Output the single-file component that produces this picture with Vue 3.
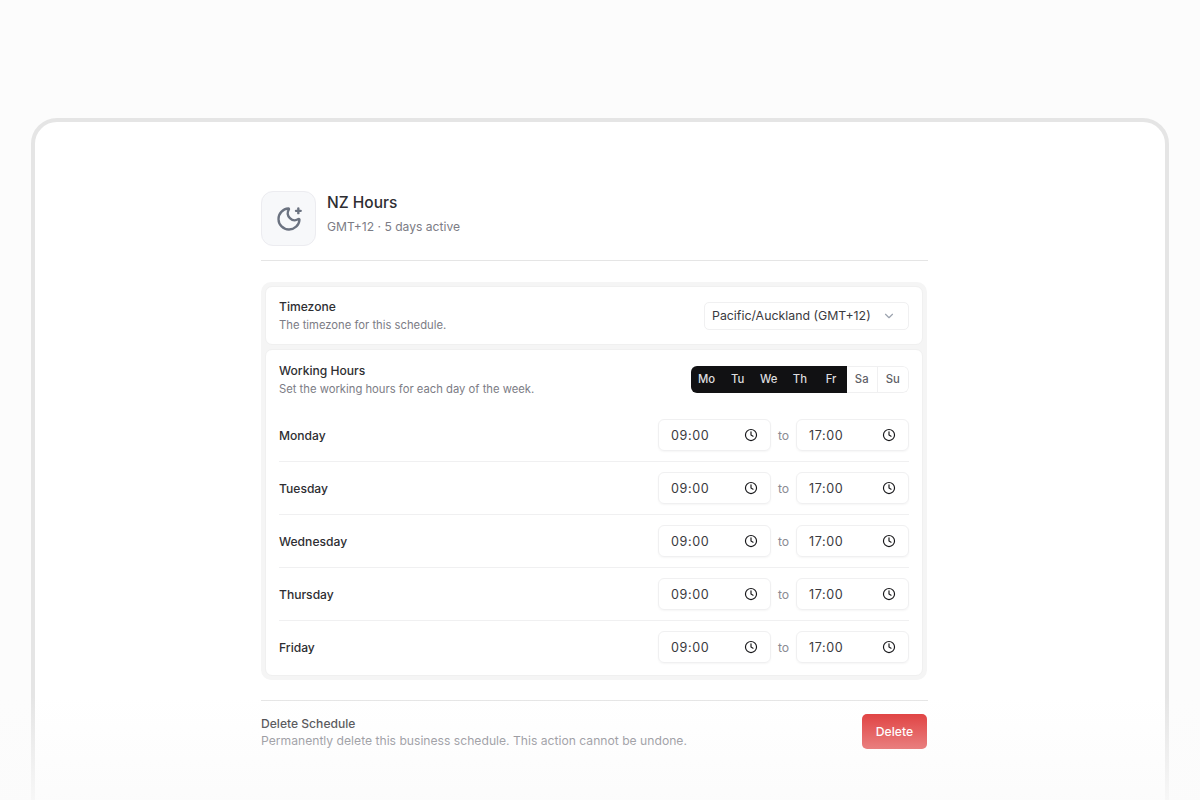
<template>
  <div class="page">
    <div class="frame">
      <div class="content">
        <header class="head">
          <div class="head-icon">
            <svg width="28" height="28" viewBox="0 0 24 24" fill="none" stroke="#6b7280" stroke-width="2" stroke-linecap="round" stroke-linejoin="round">
              <path d="M18 5h4" />
              <path d="M20 3v4" />
              <path d="M20.985 12.486a9 9 0 1 1-9.473-9.472c.405-.022.617.46.402.803a6 6 0 0 0 8.268 8.268c.344-.215.825-.004.803.401" />
            </svg>
          </div>
          <div class="head-text">
            <h1 class="title">NZ Hours</h1>
            <p class="subtitle">GMT+12 · 5 days active</p>
          </div>
        </header>

        <div class="group">
          <section class="panel tz">
            <div>
              <div class="label">Timezone</div>
              <div class="hint">The timezone for this schedule.</div>
            </div>
            <div class="select">
              <span>Pacific/Auckland (GMT+12)</span>
              <svg width="14" height="14" viewBox="0 0 24 24" fill="none" stroke="#9ca3af" stroke-width="2" stroke-linecap="round" stroke-linejoin="round">
                <path d="M6 9l6 6 6-6" />
              </svg>
            </div>
          </section>

          <section class="panel hours">
            <div class="hours-head">
              <div>
                <div class="label">Working Hours</div>
                <div class="hint">Set the working hours for each day of the week.</div>
              </div>
              <div class="days">
                <span v-for="d in days" :key="d.name" class="day" :class="{ on: d.on }">{{ d.name }}</span>
              </div>
            </div>

            <div v-for="row in rows" :key="row" class="row">
              <span class="row-name">{{ row }}</span>
              <div class="times">
                <div class="time">
                  <span>09:00</span>
                  <svg class="clock" width="14" height="14" viewBox="0 0 24 24" fill="none" stroke="#18181b" stroke-width="2" stroke-linecap="round" stroke-linejoin="round">
                    <circle cx="12" cy="12" r="9.5" />
                    <path d="M12 6.5V12l3.5 2" />
                  </svg>
                </div>
                <span class="to">to</span>
                <div class="time">
                  <span>17:00</span>
                  <svg class="clock" width="14" height="14" viewBox="0 0 24 24" fill="none" stroke="#18181b" stroke-width="2" stroke-linecap="round" stroke-linejoin="round">
                    <circle cx="12" cy="12" r="9.5" />
                    <path d="M12 6.5V12l3.5 2" />
                  </svg>
                </div>
              </div>
            </div>
          </section>
        </div>

        <div class="danger">
          <div>
            <div class="danger-title">Delete Schedule</div>
            <div class="danger-hint">Permanently delete this business schedule. This action cannot be undone.</div>
          </div>
          <button class="delete" type="button">Delete</button>
        </div>
      </div>
    </div>
    <div class="fade"></div>
  </div>
</template>

<script setup>
const days = [
  { name: 'Mo', on: true },
  { name: 'Tu', on: true },
  { name: 'We', on: true },
  { name: 'Th', on: true },
  { name: 'Fr', on: true },
  { name: 'Sa', on: false },
  { name: 'Su', on: false },
]

const rows = ['Monday', 'Tuesday', 'Wednesday', 'Thursday', 'Friday']
</script>

<style>
html, body {
  margin: 0;
  background: #fcfcfc;
}
</style>

<style scoped>
.page {
  position: relative;
  height: 800px;
  overflow: hidden;
  padding: 118px 31px 0;
  box-sizing: border-box;
  font-family: Inter, "Liberation Sans", sans-serif;
  color: #18181b;
}

.frame {
  height: 760px;
  box-sizing: border-box;
  border: 4px solid #e5e5e5;
  border-radius: 26px;
  background: #fff;
  padding: 69px 0 0 226px;
}

.content {
  width: 667px;
}

/* header */
.head {
  display: flex;
  align-items: flex-start;
  gap: 11px;
  padding-bottom: 14px;
  border-bottom: 1px solid #e5e5e5;
}

.head-icon {
  width: 55px;
  height: 55px;
  box-sizing: border-box;
  display: flex;
  align-items: center;
  justify-content: center;
  background: #f7f8fa;
  border: 1px solid #ececf0;
  border-radius: 12px;
}

.head-text {
  padding-top: 1px;
}

.title {
  margin: 0;
  font-size: 15.5px;
  line-height: 22px;
  font-weight: 500;
  color: #2e2e32;
}

.subtitle {
  margin: 4px 0 0;
  font-size: 12.1px;
  line-height: 18px;
  color: #7c7c85;
}

/* settings group */
.group {
  margin: 21px 1px 0 0;
  padding: 4px;
  display: flex;
  flex-direction: column;
  gap: 4px;
  background: #f5f5f5;
  border-radius: 10px;
}

.panel {
  background: #fff;
  border: 1px solid #f0f0f0;
  border-radius: 7px;
  padding: 0 13px;
}

.tz {
  height: 59px;
  box-sizing: border-box;
  display: flex;
  align-items: center;
  justify-content: space-between;
}

.label {
  font-size: 12.1px;
  line-height: 18px;
  font-weight: 500;
  color: #2e2e32;
}

.hint {
  font-size: 11.25px;
  line-height: 16px;
  margin-top: 1px;
  color: #7c7c85;
}

.select {
  width: 205px;
  height: 28px;
  box-sizing: border-box;
  padding: 0 12px 0 7px;
  display: flex;
  align-items: center;
  justify-content: space-between;
  border: 1px solid #f0f0f1;
  border-radius: 5px;
  font-size: 12.35px;
  color: #3a3a40;
}

.hours {
  padding-top: 12px;
  padding-bottom: 2px;
}

.hours-head {
  display: flex;
  align-items: center;
  justify-content: space-between;
  padding-bottom: 12px;
}

.days {
  display: flex;
  width: 218px;
  height: 27px;
  margin-top: -1px;
  border-radius: 6px;
  overflow: hidden;
}

.day {
  flex: none;
  width: 31.14px;
  display: flex;
  align-items: center;
  justify-content: center;
  box-sizing: border-box;
  border: 1px solid #f0f0f1;
  border-left: 0;
  font-size: 11.3px;
  font-weight: 500;
  color: #5f5f68;
}

.day.on {
  border: 0;
  background: #111113;
  color: #dcdcdf;
}

.day:last-child {
  border-radius: 0 6px 6px 0;
}

.row {
  height: 52px;
  display: flex;
  align-items: center;
  justify-content: space-between;
  border-top: 1px solid #f0f0f1;
}

.hours-head + .row {
  border-top: 0;
}

.row-name {
  font-size: 12.1px;
  font-weight: 500;
  color: #2e2e32;
}

.times {
  display: flex;
  align-items: center;
  gap: 7px;
}

.time {
  width: 113px;
  height: 32px;
  box-sizing: border-box;
  display: flex;
  align-items: center;
  justify-content: space-between;
  padding: 0 12px 0 12px;
  border: 1px solid #f0f0f1;
  border-radius: 6px;
  box-shadow: 0 1px 2px rgba(0, 0, 0, .04);
  font-size: 12.6px;
  letter-spacing: .6px;
  color: #3a3a40;
}

.to {
  font-size: 12.2px;
  color: #8b8b93;
  width: 11px;
  text-align: center;
}

/* danger zone */
.danger {
  margin-top: 20px;
  padding-top: 13px;
  border-top: 1px solid #e5e5e5;
  display: flex;
  align-items: center;
  justify-content: space-between;
}

.danger-title {
  font-size: 12.1px;
  line-height: 17px;
  font-weight: 500;
  color: #2e2e32;
}

.danger-hint {
  font-size: 12.15px;
  line-height: 17px;
  color: #71717a;
}

.delete {
  width: 65px;
  height: 35px;
  margin-right: 1px;
  border: 0;
  padding: 0;
  border-radius: 5px;
  background: #dc2626;
  color: #fff;
  font: 500 12.2px Inter, "Liberation Sans", sans-serif;
}

.fade {
  position: absolute;
  left: 0;
  right: 0;
  bottom: 0;
  height: 104px;
  background: linear-gradient(to bottom, rgba(251, 251, 251, 0), rgba(251, 251, 251, .82));
  pointer-events: none;
}
</style>
